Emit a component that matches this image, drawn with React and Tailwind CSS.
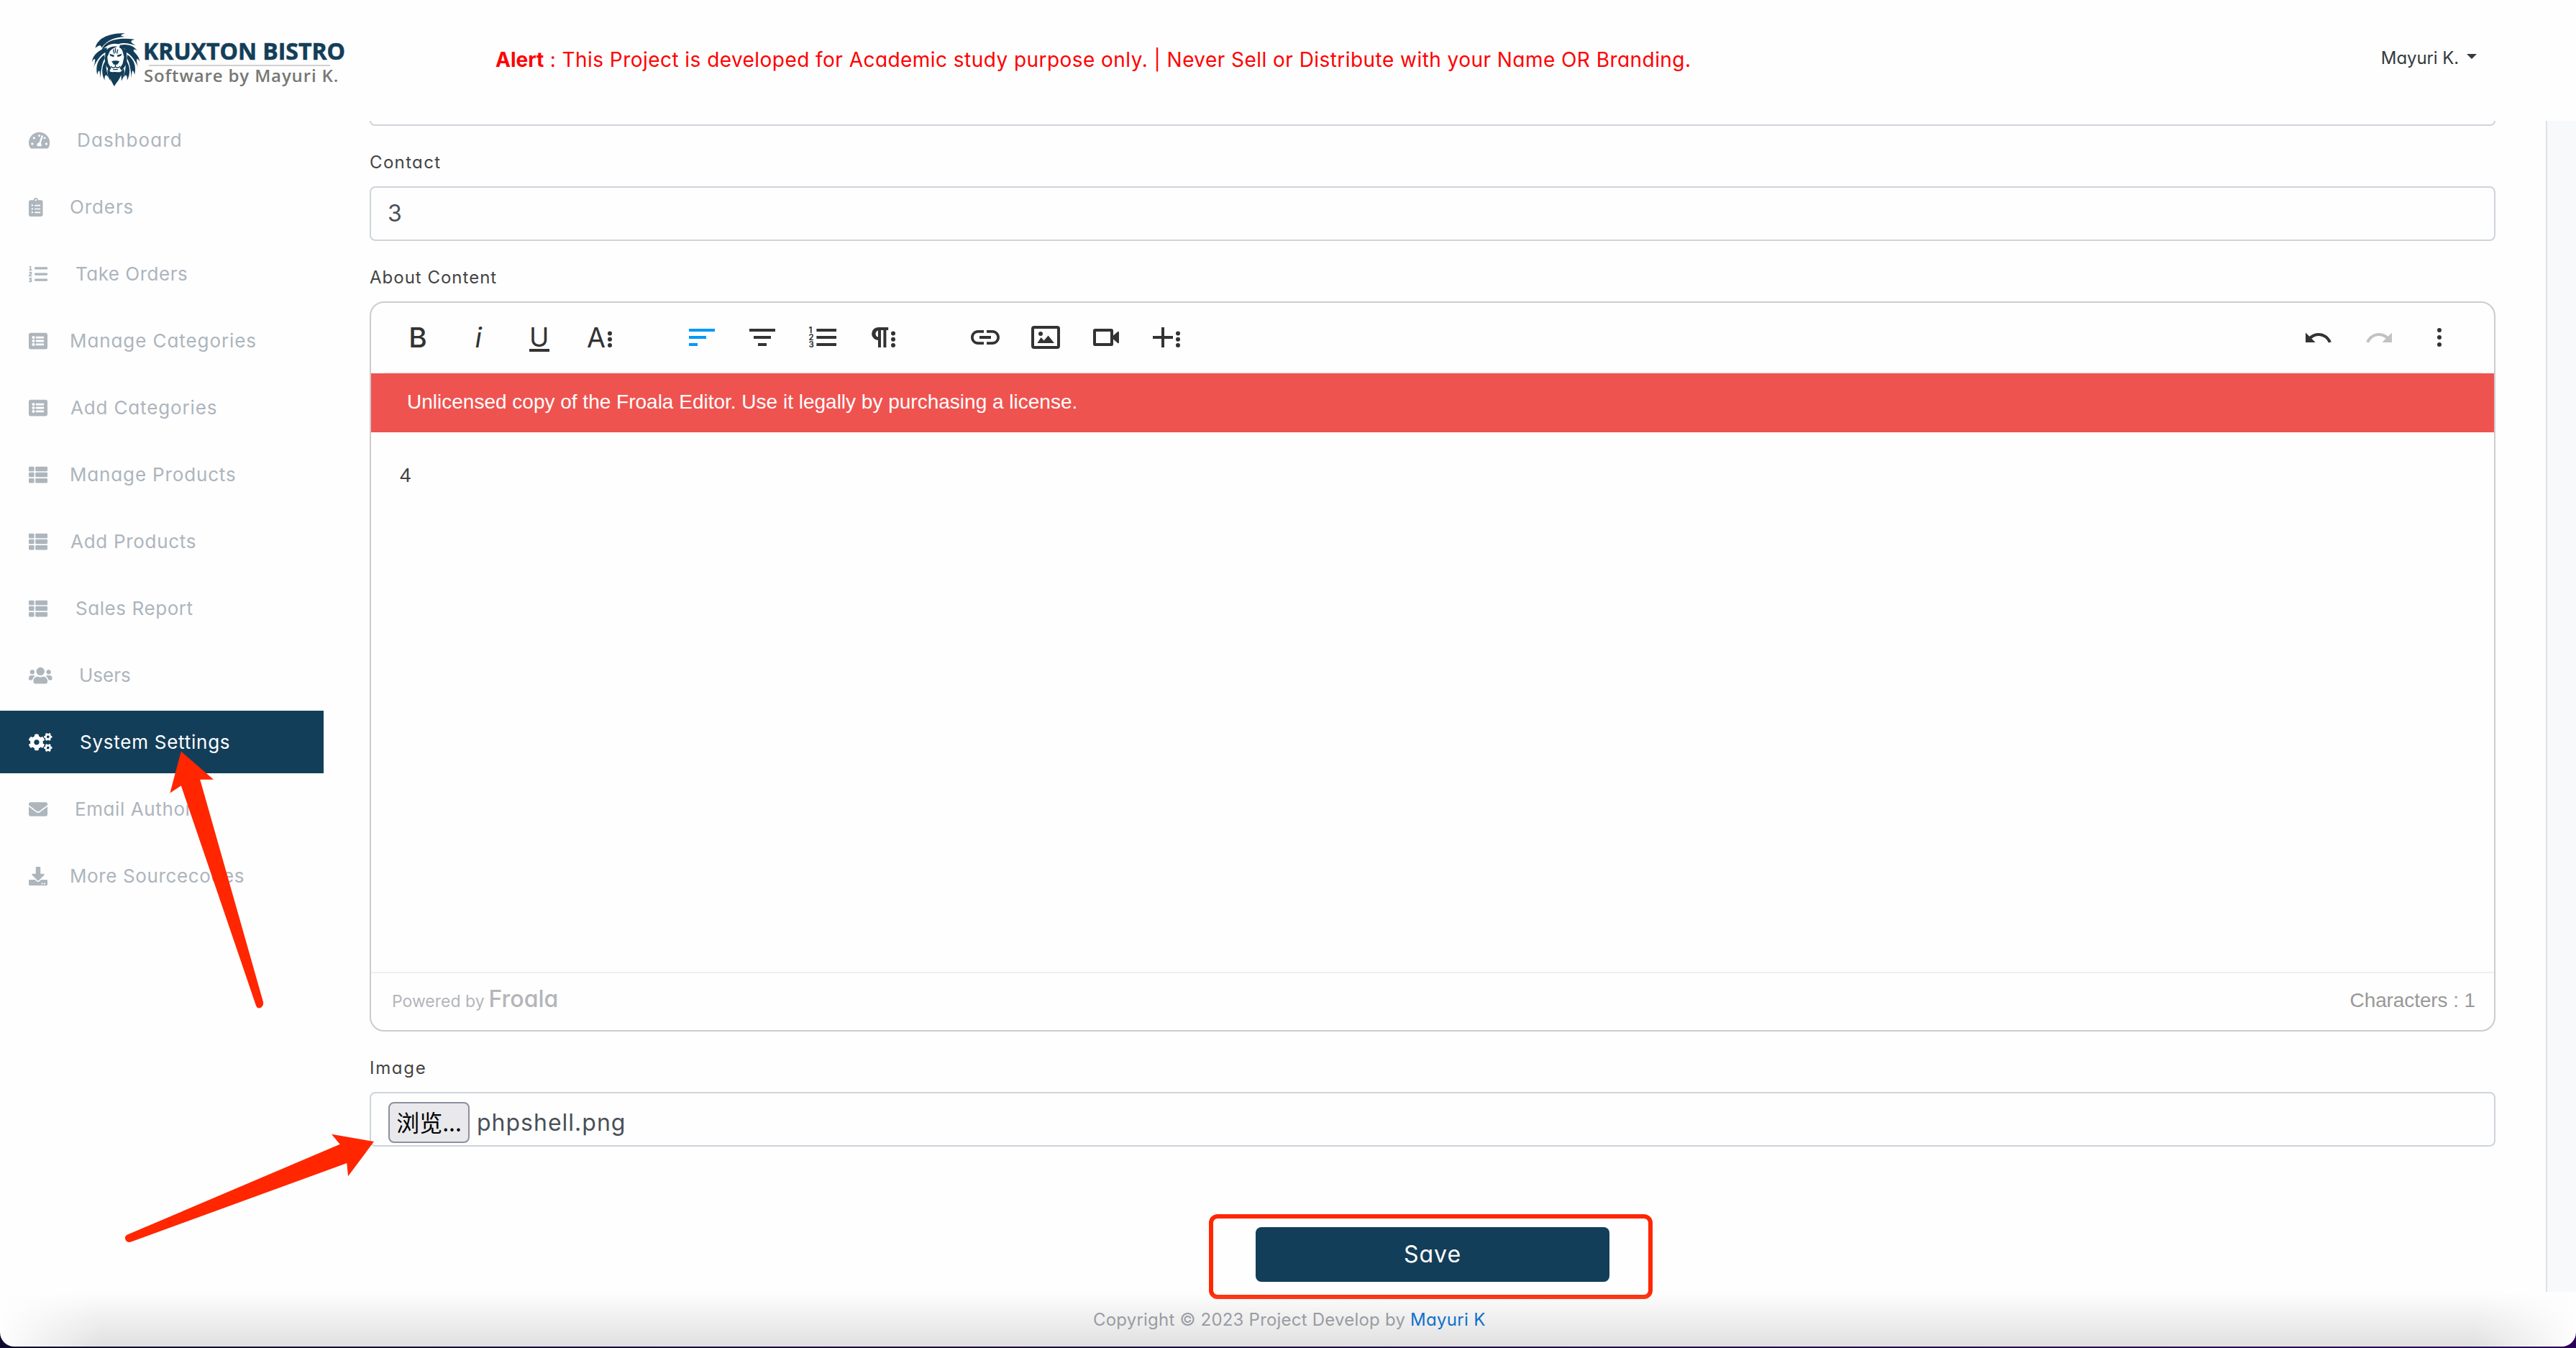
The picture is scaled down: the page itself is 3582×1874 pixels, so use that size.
import { FaTachometerAlt, FaClipboardList, FaListOl, FaListAlt, FaThList, FaUsers, FaCogs, FaEnvelope, FaDownload } from 'react-icons/fa';
import { MdLink } from 'react-icons/md';

const NAV = [
  { label: 'Dashboard', icon: FaTachometerAlt, size: 'w-[29.25px]', slot: 'w-[67px]', track: 'tracking-[1.15px]' },
  { label: 'Orders', icon: FaClipboardList, size: 'w-[19.5px]', slot: 'w-[57px]', track: 'tracking-[0.9px]' },
  { label: 'Take Orders', icon: FaListOl, size: 'w-[26px]', slot: 'w-[65px]', track: 'tracking-[0.5px]' },
  { label: 'Manage Categories', icon: FaListAlt, size: 'w-[26px]', slot: 'w-[57px]', track: 'tracking-[0.92px]' },
  { label: 'Add Categories', icon: FaListAlt, size: 'w-[26px]', slot: 'w-[58px]', track: 'tracking-[0.85px]' },
  { label: 'Manage Products', icon: FaThList, size: 'w-[26px]', slot: 'w-[57px]', track: 'tracking-[0.85px]' },
  { label: 'Add Products', icon: FaThList, size: 'w-[26px]', slot: 'w-[58px]', track: 'tracking-[0.7px]' },
  { label: 'Sales Report', icon: FaThList, size: 'w-[26px]', slot: 'w-[65px]', track: 'tracking-[0.57px]' },
  { label: 'Users', icon: FaUsers, size: 'w-[32.5px]', slot: 'w-[70px]', track: '' },
  { label: 'System Settings', icon: FaCogs, size: 'w-[32.5px]', slot: 'w-[71px]', track: 'tracking-[0.75px]', active: true },
  { label: 'Email Author', icon: FaEnvelope, size: 'w-[26px]', slot: 'w-[64px]', track: 'tracking-[0.6px]' },
  { label: 'More Sourcecodes', icon: FaDownload, size: 'w-[26px]', slot: 'w-[57px]', track: 'tracking-[0.62px]' },
];

function Lion() {
  const side = (
    <>
      <path d="M222 110C255 120 280 140 284 170C274 152 264 150 277 192C262 160 245 137 222 128z" />
      <path d="M232 140C260 160 270 188 262 224C256 202 251 196 249 238C246 200 240 168 230 156z" />
      <path d="M228 166C243 186 246 218 231 247C232 226 226 216 214 238C224 206 226 190 224 172z" />
      <path d="M216 196C222 210 220 225 207 250C208 234 205 226 204 218z" />
    </>
  );
  return (
    <svg viewBox="85 50 200 222" className="h-[74px] w-[67px] shrink-0 fill-[#133e59]">
      {side}
      <g transform="translate(368 0) scale(-1 1)">{side}</g>
      <path d="M98 112C108 66 165 50 222 51C205 58 195 61 222 65C180 68 150 76 124 112C124 98 114 98 98 112z" />
      <path d="M124 126C132 84 182 66 262 76C248 82 236 83 268 102C238 92 218 88 194 96C165 90 142 102 124 126z" />
      <path d="M200 100C240 92 262 108 272 122C256 114 250 118 270 142C246 122 232 114 200 112z" />
      <path d="M140 128C150 108 175 104 190 106C175 112 160 118 156 132L148 150 152 176 164 196 158 206C146 192 138 180 138 164z" />
      <path d="M228 128C222 112 208 106 196 106C205 112 212 120 214 134L218 150 212 178 200 196 208 206C220 192 230 180 230 164z" />
      <path d="M150 200C152 230 166 252 177 272C186 256 206 240 212 200C204 218 196 212 182 212C168 212 158 216 150 200z" />
      <path d="M157 136l20 6-2 8-14-5zM209 136l-20 6 2 8 14-5zM166 168q17-6 33 0l-9 13h-15z" />
      <path d="M182 180v12M182 191q-10 8-20-2M182 191q10 8 20-2M172 202h20M182 112v20M173 118l4 18M192 118l-4 18" className="fill-none stroke-[#133e59] stroke-[4]" />
    </svg>
  );
}

const dots = (x, ys) => ys.map((y) => <circle key={y} cx={x} cy={y} r="1.5" />);
const LOW = [9.3, 13.4, 17.5];

const BOLD = <text x="5.1" y="19" className="font-medium" fontSize="19.4">B</text>;
const ITALIC = <text x="9.2" y="19" className="italic" fontSize="19.4">i</text>;
const UNDER = <><text x="5" y="18.4" fontSize="18.4">U</text><path d="M5 20h14v2H5z" /></>;
const FONT = <><text x="3" y="19" fontSize="19.4" textLength="13" lengthAdjust="spacingAndGlyphs">A</text>{dots(19, LOW)}</>;
const LEFT = <path d="M3 6h18v2H3zM3 11h12v2H3zM3 16h6v2H3z" />;
const CENTER = <path d="M3 6h18v2H3zM6 11h12v2H6zM9 16h6v2H9z" />;
const OL = <><path d="M7.7 6h13.8v2H7.7zM7.7 11h13.8v2H7.7zM7.7 16h13.8v2H7.7z" />{[1, 2, 3].map((n) => <text key={n} x="2.2" y={4 + n * 5} fontSize="5.6" className="font-bold">{n}</text>)}</>;
const PARA = <><path d="M8.6 5H15.6V7H14.2V19H12.2V7H10.5V19H8.5V14A4.5 4.5 0 0 1 8.6 5zM8.5 7.2a2.4 2.4 0 0 0 0 4.6z" fillRule="evenodd" />{dots(19, LOW)}</>;
const IMAGE = <><rect x="3" y="5" width="18" height="14" rx="1" className="fill-none stroke-[#333] stroke-2" /><circle cx="8.5" cy="9.5" r="1.5" /><path d="M6.2 16l2.6-4 2 2.3 3-3.5L18 16z" /></>;
const VIDEO = <><rect x="4" y="7" width="12" height="10" rx="0.4" className="fill-none stroke-[#333] stroke-2" /><path d="M17 10.8L20 8.1q1-.7 1 .5v6.8q0 1.2-1 .5L17 13.2z" /></>;
const PLUS = <><path d="M8.5 5h2v6h6v2h-6v6h-2v-6h-6v-2h6z" />{dots(20, LOW)}</>;
const UNDO = <path d="M3 8.7v6.8h6.8L7.2 12.9A7 7 0 0 1 12 11c3 0 5.7 1.7 7 4.8l1.9-.7C19.4 11.4 16 9 12 9A9.5 9.5 0 0 0 5.7 11.4z" />;
const MORE = dots(12, [7, 12, 17]);

function Tool({ children, className = 'fill-[#333]' }) {
  return (
    <button className="flex w-[84px] items-center justify-center">
      <svg viewBox="0 0 24 24" className={'size-12 ' + className}>{children}</svg>
    </button>
  );
}

export default function App() {
  return (
    <div className="h-[1874px] w-[3582px] overflow-hidden bg-linear-to-r from-[#0e0a30] to-[#2a0058]">
      <div className="relative flex h-[1872px] flex-col overflow-hidden rounded-b-[20px] bg-[#fefefe] font-[Inter,sans-serif] [font-feature-settings:'cv11']">
        <header className="flex h-[151px] shrink-0">
          <div className="flex w-[689px] pt-[46px] pl-[128px]">
            <Lion />
            <div className="ml-1 flex flex-col pt-[6px] font-['Open_Sans',sans-serif]">
              <span className="text-[32px] leading-[38px] font-bold whitespace-nowrap text-[#133e59] [-webkit-text-stroke:0.6px_#133e59]">KRUXTON BISTRO</span>
              <span className="ml-[8px] h-[2px] w-[252px] bg-[#d0d0d0]" />
              <span className="ml-[1px] text-[24px] leading-[25px] font-semibold tracking-[0.85px] whitespace-nowrap text-[#777875]">Software by Mayuri K.</span>
            </div>
          </div>
          <p className="flex-1 pt-[63px] text-[28px] leading-[40px] whitespace-pre text-[#ff0000]"><b>Alert</b><span className="tracking-[0.45px]"> : This Project is developed for Academic study purpose only. | Never Sell or Distribute with your Name OR Branding.</span></p>
          <div className="mt-[61px] mr-[138px] flex h-[40px] items-center text-[24px] text-[#343a40]">
            <span className="tracking-[-0.1px]">Mayuri K.</span>
            <span className="-mt-[5px] ml-[11px] border-x-[7px] border-t-[7px] border-x-transparent border-t-[#343a40]" />
          </div>
        </header>

        <div className="flex min-h-0 flex-1">
          <nav className="flex w-[450px] shrink-0 flex-col gap-[6px]">
            {NAV.map(({ label, icon: Icon, size, slot, track, active }) => (
              <a key={label} className={'flex h-[87px] shrink-0 items-center pl-[40px] text-[26px] ' + (active ? 'bg-[#133e59] text-white' : 'text-[#adb5bd]')}>
                <span className={'shrink-0 ' + slot}><Icon className={'h-[26px] ' + size} /></span>
                <span className={'whitespace-nowrap ' + track}>{label}</span>
              </a>
            ))}
          </nav>

          <main className="ml-[64px] flex w-[2956px] shrink-0 flex-col pt-[17px] text-[#444]">
            <div className="h-[7px] shrink-0 rounded-b-[8px] border-2 border-t-0 border-[#ced4da]" />
            <label className="mt-[31px] h-[40px] text-[24px] leading-[40px] tracking-[1.35px]">Contact</label>
            <div className="mt-[13px] flex h-[76px] shrink-0 items-center rounded-[8px] border-2 border-[#ced4da] pl-[23px] text-[32px] text-[#495057]">3</div>
            <label className="mt-[31px] h-[40px] text-[24px] leading-[40px] tracking-[1px]">About Content</label>

            <section className="mt-[13px] flex h-[1015px] shrink-0 flex-col rounded-[20px] border-2 border-[#ccc]">
              <div className="mx-[18px] flex h-[98px] shrink-0 border-b-2 border-[#efefef] pr-[16px] pl-[6px]">
                <div className="flex"><Tool>{BOLD}</Tool><Tool>{ITALIC}</Tool><Tool>{UNDER}</Tool><Tool>{FONT}</Tool></div>
                <div className="ml-[58px] flex"><Tool className="fill-[#0098f7]">{LEFT}</Tool><Tool>{CENTER}</Tool><Tool>{OL}</Tool><Tool>{PARA}</Tool></div>
                <div className="ml-[58px] flex">
                  <button className="flex w-[84px] items-center justify-center"><MdLink className="size-12 text-[#333]" /></button>
                  <Tool>{IMAGE}</Tool><Tool>{VIDEO}</Tool><Tool>{PLUS}</Tool>
                </div>
                <div className="ml-auto flex"><Tool>{UNDO}</Tool><Tool className="-scale-x-100 fill-[#c2c2c2]">{UNDO}</Tool><Tool>{MORE}</Tool></div>
              </div>
              <div className="flex h-[82px] shrink-0 items-center bg-[#ef5350] pb-[3px] pl-[50px] font-['Liberation_Sans',sans-serif] text-[28px] text-white">Unlicensed copy of the Froala Editor. Use it legally by purchasing a license.</div>
              <div className="flex-1 pt-[42px] pl-[40px] font-['Liberation_Sans',sans-serif] text-[28px] leading-[36px] text-[#414141]">4</div>
              <footer className="flex h-[81px] shrink-0 items-center justify-between border-t-2 border-[#efefef] pr-[26px] pb-[4px] pl-[29px]">
                <div className="flex items-baseline pb-[3px] text-[#b4b5bb]"><span className="text-[23px]">Powered by</span><span className="ml-[6px] text-[32px] font-medium">Froala</span></div>
                <span className="font-['Liberation_Sans',sans-serif] text-[28px] tracking-[-0.1px] text-[#999]">Characters : 1</span>
              </footer>
            </section>

            <label className="mt-[31px] h-[40px] text-[24px] leading-[40px] tracking-[1.7px]">Image</label>
            <div className="mt-[13px] flex h-[76px] shrink-0 items-center rounded-[8px] border-2 border-[#ced4da] pt-[9px] pl-[24px]">
              <button className="flex h-[57px] w-[113px] items-center justify-center rounded-[8px] border-2 border-[#8f8f9d] bg-[#e9e9ed] pb-[3px] font-['Noto_Sans_CJK_SC',sans-serif] text-[32px] leading-none text-black">浏览...</button>
              <span className="ml-[10px] text-[32px] leading-[40px] tracking-[1px] text-[#495057]">phpshell.png</span>
            </div>
            <div className="relative mt-[112px] h-[76px] w-[492px] shrink-0 self-center">
              <button className="size-full rounded-[8px] bg-[#133e59] text-[32px] tracking-[1px] text-white">Save</button>
              <span className="absolute -top-[18px] -left-[65px] h-[118px] w-[617px] rounded-[12px] border-[6px] border-[#ff2600]" />
            </div>
          </main>
          <aside className="mt-[17px] ml-[70px] h-[1628px] w-[42px] border-l-2 border-[#dee2e6] bg-[#f8f9fb]" />
        </div>

        <div className="absolute inset-x-0 bottom-0 h-[76px] bg-linear-to-b from-transparent to-[#e0e0e0] mask-x-from-[calc(100%-140px)]" />
        <p className="absolute bottom-[17px] left-[1520px] text-[24px] leading-[40px] whitespace-pre text-[#999ca3]"><span className="tracking-[0.21px]">Copyright © 2023 Project Develop by </span><a className="tracking-[0.3px] text-[#1070c8]">Mayuri K</a></p>

        <svg viewBox="0 0 600 1874" className="absolute top-0 left-0 h-[1874px] w-[600px] fill-[#ff2600]">
          <path d="M251.8 1044.5L297 1083.7H278.2L366 1393Q367 1399 361 1401.5Q357.500 1402 356 1398L251.8 1092.2L236.4 1102.4z" />
          <path d="M520 1587L484 1635.3L482.3 1617L182 1726.5Q177 1728 175 1724.5Q172 1719 177 1716.5L472.7 1590.7L461 1576.7z" />
        </svg>
      </div>
    </div>
  );
}
